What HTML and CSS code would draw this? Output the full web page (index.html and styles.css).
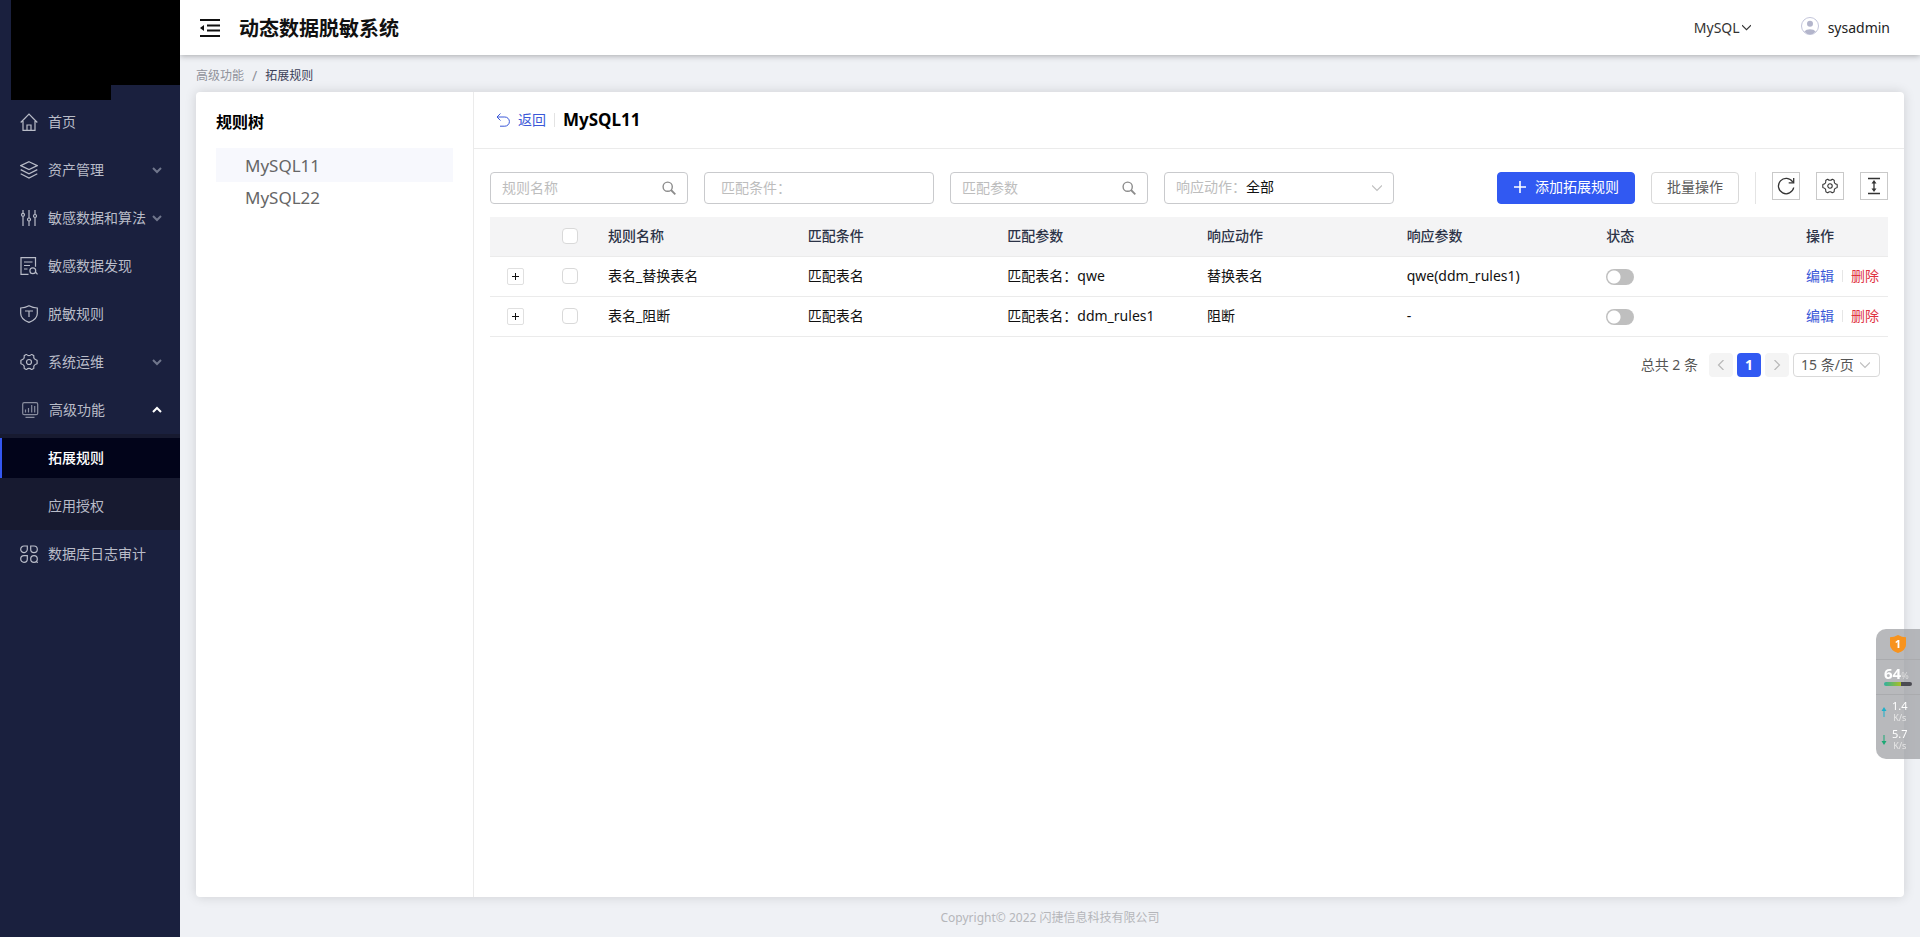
FILE: index.html
```html
<!DOCTYPE html>
<html lang="zh-CN">
<head>
<meta charset="utf-8">
<title>动态数据脱敏系统</title>
<link rel="stylesheet" href="styles.css">
</head>
<body>
<svg class="defs" width="0" height="0" aria-hidden="true">
  <symbol id="chev" viewBox="0 0 10 10"><path d="M1 3l4 4 4-4" fill="none" stroke="currentColor"/></symbol>
  <symbol id="angle" viewBox="0 0 10 10"><path d="M0 2.500l5 5 5-5" fill="none" stroke="currentColor" stroke-width="1.200"/></symbol>
  <symbol id="search" viewBox="0 0 14 14"><g fill="none" stroke="currentColor"><circle cx="5.700" cy="5.700" r="4.600" stroke-width="1.400"/><path d="M9 9l4.300 4.300" stroke-width="1.800"/></g></symbol>
  <symbol id="gear" viewBox="0 0 18 18"><g fill="none" stroke="currentColor" stroke-width="1.2"><path d="M6.2 1.5h0.5Q7.500 2.600 9 2.600T11.300 1.500h.5l1.800 1q.3.300.2.700-.3 1.500.5 2.500 1 1.100 2.300 1.300l.5.500v3l-.5.500q-1.300.2-2.300 1.300-.8 1-.5 2.500.1.400-.2.700l-1.800 1h-.5Q10.500 15.400 9 15.400T6.700 16.500h-.5l-1.800-1q-.3-.3-.2-.7.3-1.500-.5-2.500-1-1.100-2.300-1.300l-.5-.5v-3l.5-.5q1.300-.2 2.300-1.300.8-1 .5-2.500-.1-.4.200-.7z" stroke-linejoin="round"/><circle cx="9" cy="9" r="2.500"/></g></symbol>
</svg>
<div class="app">
  <aside class="sidebar">
    <div class="brand"><div class="brand-block"></div><div class="brand-tail"></div></div>
    <nav>
      <ul class="menu">
        <li><a class="menu-item" href="#"><svg class="mi" viewBox="0 0 18 18"><path d="M.7 9.500L9 1l8.300 8.500M3 8v9.300h12V8M7 17v-5h4v5"/></svg><span>首页</span></a></li>
        <li><a class="menu-item" href="#"><svg class="mi" viewBox="0 0 18 18"><path d="M9 .7l8.300 3.900L9 8.500.7 4.600zM.7 8.600L9 12.900l8.300-4.300M.7 12.700L9 17l8.300-4.300"/></svg><span>资产管理</span><svg class="arrow"><use href="#chev"/></svg></a></li>
        <li><a class="menu-item" href="#"><svg class="mi" viewBox="0 0 18 18"><path d="M3 1v3M3 7.500V17M9 1v8M9 12v5M15 1v4.500M15 9v8"/><circle cx="3" cy="5.800" r="1.500"/><circle cx="9" cy="10.500" r="1.500"/><circle cx="15" cy="7" r="1.500"/></svg><span>敏感数据和算法</span><svg class="arrow"><use href="#chev"/></svg></a></li>
        <li><a class="menu-item" href="#"><svg class="mi" viewBox="0 0 18 18"><path d="M8.500 17.300H1V.7h14.500v9M4 5h8.500M4 8.500h6M4 12h3.500M15.500 15l2 2.300"/><circle cx="12.800" cy="13.800" r="2.900"/></svg><span>敏感数据发现</span></a></li>
        <li><a class="menu-item" href="#"><svg class="mi" viewBox="0 0 18 18"><path d="M9 .7q4 2.100 8.300 2.300v5.500q0 5.800-8.300 8.900Q.7 14.300.7 8.500V3Q5 2.800 9 .7zM5 6h8M9 6v6"/></svg><span>脱敏规则</span></a></li>
        <li><a class="menu-item" href="#"><svg class="mi"><use href="#gear"/></svg><span>系统运维</span><svg class="arrow"><use href="#chev"/></svg></a></li>
        <li>
          <a class="menu-item open" href="#"><svg class="mi monitor" viewBox="0 0 18 18"><rect x="1.700" y="1.700" width="15" height="12" rx="1.500"/><path d="M4.500 8.500v3M7.500 7v4.500M10.700 4v7.500M13.700 5v6.500M4.500 16.300h9"/></svg><span>高级功能</span><svg class="arrow"><use href="#chev"/></svg></a>
          <ul class="submenu">
            <li><a class="active" href="#">拓展规则</a></li>
            <li><a href="#">应用授权</a></li>
          </ul>
        </li>
        <li><a class="menu-item" href="#"><svg class="mi" viewBox="0 0 18 18"><path d="M4 1h3.300v3A3.300 3.300 0 1 1 4 1zM14 1a3.300 3.300 0 1 1-3.300 3.300V1zM4 10.700h3.300V14A3.300 3.300 0 1 1 4 10.700zM16 16l1.700 1.700"/><circle cx="14" cy="14" r="3.300"/></svg><span>数据库日志审计</span></a></li>
      </ul>
    </nav>
  </aside>
  <div class="page">
    <header class="topbar">
      <button class="fold" aria-label="折叠菜单"><svg width="20" height="18" viewBox="0 0 20 18"><path d="M0 1h20M7 6.500h13M7 11.500h13M0 17h20" stroke="#111" stroke-width="1.800"/><path d="M0 9l4-3v6z" fill="#111"/></svg></button>
      <h1>动态数据脱敏系统</h1>
      <button class="db">MySQL<svg width="9" height="9"><use href="#angle"/></svg></button>
      <button class="user"><svg width="18" height="18" viewBox="0 0 18 18"><circle cx="9" cy="9" r="8.500" fill="#fff" stroke="#c3c5da"/><circle cx="9" cy="6.800" r="3" fill="#b3b5cb"/><path d="M3.300 14.500a6.500 4.500 0 0 1 11.400 0Q12.500 17.300 9 17.300T3.300 14.500z" fill="#b3b5cb"/></svg><span>sysadmin</span></button>
    </header>
    <nav class="crumbs" aria-label="位置"><a href="#">高级功能</a><span class="sep">/</span><span class="here">拓展规则</span></nav>
    <main class="card">
      <section class="tree">
        <h2>规则树</h2>
        <ul>
          <li><a class="selected" href="#">MySQL11</a></li>
          <li><a href="#">MySQL22</a></li>
        </ul>
      </section>
      <section class="detail">
        <div class="detail-head">
          <a class="back" href="#"><svg width="14" height="14" viewBox="0 0 14 14"><path d="M4.500.5L1 4l3.500 3.500M1 4h7.800a4.600 4.600 0 0 1 0 9.200H4" fill="none" stroke="currentColor"/></svg>返回</a>
          <h2>MySQL11</h2>
        </div>
        <div class="body">
          <div class="toolbar">
            <div class="field"><input type="text" placeholder="规则名称" aria-label="规则名称"><svg width="14" height="14"><use href="#search"/></svg></div>
            <div class="field wide cond"><input type="text" placeholder="匹配条件：" aria-label="匹配条件"></div>
            <div class="field"><input type="text" placeholder="匹配参数" aria-label="匹配参数"><svg width="14" height="14"><use href="#search"/></svg></div>
            <div class="field wide"><label for="action">响应动作：</label><select id="action"><option>全部</option></select><svg class="down" width="10" height="10"><use href="#angle"/></svg></div>
            <div class="tools">
              <button class="btn primary"><svg width="12" height="12" viewBox="0 0 12 12"><path d="M6 0v12M0 6h12" stroke="#fff" stroke-width="1.600"/></svg>添加拓展规则</button>
              <button class="btn">批量操作</button>
              <span class="rule"></span>
              <button class="square" aria-label="刷新"><svg width="18" height="18" viewBox="0 0 18 18"><path d="M15.700 5A7.700 7.700 0 1 0 16.700 10.500M16.700 1v4.800h-5" fill="none" stroke="#333" stroke-width="1.300"/></svg></button>
              <button class="square" aria-label="设置"><svg width="16" height="16"><use href="#gear"/></svg></button>
              <button class="square" aria-label="行高"><svg width="14" height="18" viewBox="0 0 14 18"><path d="M1 1.500h12M1 16.500h12M7 5v8" stroke="#333" stroke-width="1.300"/><path d="M7 3l2.500 3.500h-5zM7 15l2.500-3.500h-5z" fill="#333"/></svg></button>
            </div>
          </div>
          <table>
            <colgroup><col class="c-exp"><col class="c-chk"><col><col><col><col><col><col><col class="c-act"></colgroup>
            <thead>
              <tr><th></th><th class="mid"><input type="checkbox" class="check" aria-label="全选"></th><th>规则名称</th><th>匹配条件</th><th>匹配参数</th><th>响应动作</th><th>响应参数</th><th>状态</th><th>操作</th></tr>
            </thead>
            <tbody>
              <tr><td class="mid"><button class="expand" aria-label="展开"><svg width="9" height="9" viewBox="0 0 9 9"><path d="M4.500 1v7M1 4.500h7" stroke="#111"/></svg></button></td><td class="mid"><input type="checkbox" class="check" aria-label="选择 表名_替换表名"></td><td>表名_替换表名</td><td>匹配表名</td><td>匹配表名：qwe</td><td>替换表名</td><td>qwe(ddm_rules1)</td><td><input type="checkbox" role="switch" class="switch" aria-label="状态"></td><td><div class="ops"><a href="#">编辑</a><a class="del" href="#">删除</a></div></td></tr>
              <tr><td class="mid"><button class="expand" aria-label="展开"><svg width="9" height="9" viewBox="0 0 9 9"><path d="M4.500 1v7M1 4.500h7" stroke="#111"/></svg></button></td><td class="mid"><input type="checkbox" class="check" aria-label="选择 表名_阻断"></td><td>表名_阻断</td><td>匹配表名</td><td>匹配表名：ddm_rules1</td><td>阻断</td><td>-</td><td><input type="checkbox" role="switch" class="switch" aria-label="状态"></td><td><div class="ops"><a href="#">编辑</a><a class="del" href="#">删除</a></div></td></tr>
            </tbody>
          </table>
          <div class="pager">
            <span class="total">总共 2 条</span>
            <button class="pg" aria-label="上一页"><svg class="left" width="10" height="10"><use href="#angle"/></svg></button>
            <button class="pg on">1</button>
            <button class="pg" aria-label="下一页"><svg class="right" width="10" height="10"><use href="#angle"/></svg></button>
            <div class="size"><select aria-label="每页条数"><option>15 条/页</option></select><svg class="down" width="10" height="10"><use href="#angle"/></svg></div>
          </div>
        </div>
      </section>
    </main>
    <footer>Copyright© 2022 闪捷信息科技有限公司</footer>
  </div>
</div>
<div class="widget">
  <div class="shield"><svg width="16" height="18" viewBox="0 0 16 18"><path d="M8 0q4 2.200 8 2.200V10q0 5-8 8-8-3-8-8V2.200Q4 2.200 8 0z" fill="#f8931d"/></svg><b>1</b></div>
  <div class="load"><div><b>64</b><small>%</small></div><div class="bar"></div></div>
  <div class="net"><svg width="6" height="10" viewBox="0 0 6 10"><path d="M3 0l2.500 4h-2v6h-1V4h-2z" fill="#1fb0c9"/></svg><p>1.4<small>K/s</small></p></div>
  <div class="net"><svg width="6" height="10" viewBox="0 0 6 10"><path d="M3 10L.5 6h2V0h1v6h2z" fill="#1ba974"/></svg><p>5.7<small>K/s</small></p></div>
</div>
</body>
</html>
```

FILE: styles.css
```css
* { box-sizing: border-box; }
body {
  margin: 0;
  font: 14px/20px "Noto Sans", "Noto Sans CJK SC", sans-serif;
  color: #111;
  background: #eff1f5;
}
ul { list-style: none; margin: 0; padding: 0; }
h1, h2, p { margin: 0; }
a { color: inherit; text-decoration: none; }
button, input, select { font: inherit; color: inherit; }
button { border: 0; padding: 0; background: none; cursor: pointer; }
svg { flex: none; }
.defs { position: absolute; }

.app { display: flex; min-height: 100vh; }

/* sidebar */
.sidebar { width: 180px; flex: none; background: #1a203e; color: #b9bcc8; }
.brand { height: 98px; padding-left: 11px; }
.brand-block { height: 85px; background: #000; }
.brand-tail { height: 15px; width: 100px; background: #000; }
.menu-item { display: flex; align-items: center; height: 48px; padding: 0 18px 0 20px; }
.mi { width: 18px; height: 18px; margin-right: 10px; fill: none; stroke: currentColor; stroke-width: 1.2; }
.monitor { opacity: .7; margin-left: 1px; }
.arrow { width: 10px; height: 10px; margin-left: auto; color: #70768c; stroke-width: 2; }
.open .arrow { transform: rotate(180deg); color: #fff; }
.submenu { background: #171a30; }
.submenu li { padding: 4px 0; }
.submenu a { display: block; padding: 0 0 0 46px; line-height: 40px; border-left: 2px solid transparent; }
.submenu .active { background: #02041a; color: #fff; border-color: #3457f0; font-weight: 500; }

/* page frame */
.page { flex: 1; min-width: 0; display: flex; flex-direction: column; }
.topbar {
  display: flex; align-items: center; height: 55px; padding: 0 30px 0 20px;
  background: #fff; box-shadow: 0 1px 6px rgba(0, 0, 0, .3);
}
.fold { display: flex; margin-right: 19px; }
.topbar h1 { font-size: 20px; line-height: 28px; font-weight: 700; padding-top: 3px; margin-right: auto; }
.db { display: flex; align-items: center; gap: 2px; margin-right: 50px; color: #333; }
.user { display: flex; align-items: center; gap: 9px; color: #222; }
.user svg { margin-bottom: 3px; }
.crumbs { display: flex; align-items: center; height: 37px; padding: 4px 16px 0; font-size: 12px; color: #8f929b; }
.sep { margin: 0 8px; font-size: 14px; }
.here { color: #3b4058; }
.card {
  flex: 1; display: flex; margin: 0 16px; background: #fff;
  border-radius: 4px; box-shadow: 0 0 12px rgba(0, 0, 0, .14);
}
footer { height: 40px; padding-top: 2px; line-height: 38px; text-align: center; font-size: 12px; color: #b5b6ba; }

/* rule tree */
.tree { width: 278px; flex: none; padding: 18px 20px 0 20px; border-right: 1px solid #ebebeb; }
.tree h2, .detail-head h2 { font-size: 16px; line-height: 24px; font-weight: 700; color: #000; }
.tree ul { margin-top: 14px; }
.tree a { display: block; padding: 0 0 0 29px; font-size: 17px; line-height: 32px; color: #666; }
.tree .selected { background: #f7f8fd; padding-top: 2px; }

/* detail */
.detail { flex: 1; min-width: 0; }
.detail-head { display: flex; align-items: center; height: 57px; padding: 0 22px; border-bottom: 1px solid #ebebeb; }
.back { display: flex; align-items: center; gap: 8px; color: #3b58d8; padding-right: 8px; }
.detail-head h2 { padding-left: 9px; font-size: 17px; background: linear-gradient(#e3e3e3, #e3e3e3) 0 50% / 1px 14px no-repeat; }
.body { padding: 23px 16px; }
.toolbar { display: flex; gap: 16px; margin-bottom: 13px; }
.field {
  display: flex; align-items: center; width: 198px; height: 32px; padding: 0 11px 0 11px;
  border: 1px solid #c9cacd; border-radius: 4px;
}
.wide { width: 230px; }
.cond { padding-left: 16px; }
.field input, .field select {
  flex: 1; min-width: 0; width: 0; height: 28px; padding: 0 0 2px;
  border: 0; outline: 0; background: none; appearance: none;
}
.field label { padding-bottom: 2px; }
.field input::placeholder, .field label { color: #bdbdbd; }
.field svg { color: #8c8c8c; }
.down, .field .down { color: #bfbfbf; }
.tools { display: flex; gap: 16px; margin-left: auto; }
.btn { height: 32px; padding: 0 15px 2px; border: 1px solid #d9d9d9; border-radius: 4px; color: #5a5a5a; white-space: nowrap; }
.primary { display: flex; align-items: center; gap: 9px; padding: 0 15px 2px 16px; background: #3159f2; border-color: #3159f2; color: #fff; }
.rule { width: 1px; height: 32px; background: #e4e4e4; }
.square { display: flex; align-items: center; justify-content: center; width: 28px; height: 28px; border: 1px solid #c9c9c9; color: #333; }

/* table */
table { width: 100%; table-layout: fixed; border-collapse: collapse; }
.c-exp { width: 50px; }
.c-chk { width: 60px; }
.c-act { width: 90px; }
th, td { height: 40px; padding: 0 8px; text-align: left; border-bottom: 1px solid #ebebeb; }
th { height: 39px; background: #f4f4f5; color: #2c3347; font-weight: 500; }
.mid { text-align: center; }
.check {
  appearance: none; display: block; width: 16px; height: 16px; margin: 0 auto;
  border: 1px solid #d9d9d9; border-radius: 4px; background: #fff;
}
.expand { display: flex; align-items: center; justify-content: center; width: 17px; height: 17px; margin: 0 auto; border: 1px solid #e0e0e0; border-radius: 2px; }
.switch { appearance: none; display: block; width: 28px; height: 16px; margin: 2px 0 0; border-radius: 8px; background: radial-gradient(circle at 8px 8px, #fff 6px, #bfbfbf 7px); }
.ops { display: flex; color: #3b58d8; }
.ops a:first-child { padding-right: 8px; }
.ops .del { padding-left: 9px; color: #e0323f; background: linear-gradient(#e6e6e6, #e6e6e6) 0 50% / 1px 12px no-repeat; }

/* pagination */
.pager { display: flex; align-items: center; justify-content: flex-end; gap: 4px; padding: 16px 8px 0 0; color: #555; }
.total { margin-right: 7px; }
.pg { display: flex; align-items: center; justify-content: center; width: 24px; height: 24px; border-radius: 4px; background: #f4f4f4; color: #b8b8b8; }
.on { background: #3159f2; color: #fff; font-weight: 700; }
.left { transform: rotate(90deg); }
.right { transform: rotate(-90deg); }
.size { display: flex; align-items: center; width: 87px; height: 24px; padding: 0 9px 0 7px; border: 1px solid #d9d9d9; border-radius: 4px; }
.size select { flex: 1; width: 0; min-width: 0; height: 22px; padding: 0; border: 0; background: none; appearance: none; }

/* floating system monitor */
.widget {
  position: fixed; right: 0; top: 629px; width: 44px; height: 130px;
  border-radius: 10px 0 0 10px; background: rgba(160, 161, 165, .75); color: #fff;
}
.shield { position: relative; display: flex; justify-content: center; padding: 6px 0 6px; border-bottom: 1px solid #aaabae; }
.shield b { position: absolute; top: 8px; font-size: 11px; line-height: 14px; }
.load { height: 35px; padding: 4px 8px 0; border-bottom: 1px solid #aaabae; font-size: 15px; line-height: 18px; white-space: nowrap; }
.load small { font-size: 9px; color: #ddd; }
.load div:first-child { height: 18px; }
.bar { width: 28px; height: 4px; border-radius: 2px; background: linear-gradient(90deg, #2fb0a0, #a9bf22 60%, #4b4b52 61%); }
.net { display: flex; align-items: center; gap: 5px; padding: 5px 0 0 5px; }
.net p { font-size: 11px; line-height: 12px; text-align: center; }
.net small { display: block; font-size: 9px; line-height: 11px; color: #e6e6e6; }
```
